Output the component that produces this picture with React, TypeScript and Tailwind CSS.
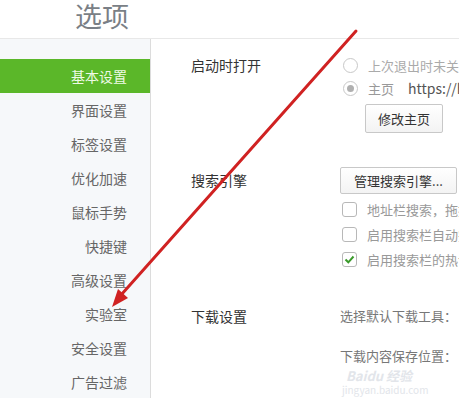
import React from "react";

const font = { fontFamily: '"Microsoft YaHei", "Noto Sans CJK SC", "Noto Sans", sans-serif' };

const menu = ["基本设置", "界面设置", "标签设置", "优化加速", "鼠标手势", "快捷键", "高级设置", "实验室", "安全设置", "广告过滤"];

function Radio({ checked }: { checked?: boolean }) {
  return (
    <span className="w-[15px] h-[15px] rounded-full border border-[#c8c8c8] bg-white flex items-center justify-center shrink-0">
      {checked && <span className="w-[7px] h-[7px] rounded-full bg-[#b0b0b0]" />}
    </span>
  );
}

function Check({ checked }: { checked?: boolean }) {
  return (
    <span className="w-[15px] h-[15px] rounded-[3px] border border-[#b8b8b8] bg-white flex items-center justify-center shrink-0">
      {checked && (
        <svg width="11" height="11" viewBox="0 0 11 11">
          <path d="M1.5 5.5 L4.3 8.3 L9.5 2.5" fill="none" stroke="#3a9a2a" strokeWidth="2" />
        </svg>
      )}
    </span>
  );
}

export default function App() {
  return (
    <div className="relative w-[459px] h-[398px] overflow-hidden bg-white" style={font}>
      <div className="h-[39px] border-b border-[#e8e8e8] pl-[75px] flex items-start">
        <span className="text-[27px] leading-[31px] text-[#7a7f86]">选项</span>
      </div>
      <div className="flex h-[359px]">
        <div className="w-[151px] shrink-0 bg-[#f6f8fa] border-r border-[#dcdcdc] pt-[20px]">
          {menu.map((m, i) => (
            <div
              key={m}
              className={
                "h-[34px] flex items-center justify-end pr-[23px] text-[14px] " +
                (i === 0 ? "bg-[#5bb729] text-[#eefae6]" : "text-[#666]")
              }
            >
              {m}
            </div>
          ))}
        </div>
        <div className="flex-1 min-w-0 pl-[40px] pt-[15px] text-[13px] whitespace-nowrap overflow-hidden">
          <div className="flex">
            <div className="w-[149px] shrink-0 h-[23px] flex items-center text-[14px] text-[#333]">启动时打开</div>
            <div className="flex flex-col">
              <div className="h-[23px] flex items-center gap-[10px] pl-[3px] text-[#aaa]">
                <Radio />
                <span>上次退出时未关闭的页面</span>
              </div>
              <div className="h-[23px] flex items-center gap-[10px] pl-[3px]">
                <Radio checked />
                <span className="text-[#999]">主页</span>
                <span className="text-[#555] text-[14px] ml-[4px]">https://hao.360.cn</span>
              </div>
              <div className="pl-[25px] mt-[4px]">
                <div className="w-[78px] h-[29px] border border-[#c8c8c8] rounded-[2px] bg-gradient-to-b from-white to-[#f3f3f3] flex items-center justify-center text-[#333] text-[13px]">
                  修改主页
                </div>
              </div>
            </div>
          </div>

          <div className="flex mt-[34px]">
            <div className="w-[149px] shrink-0 h-[27px] flex items-center text-[14px] text-[#333]">搜索引擎</div>
            <div className="flex flex-col">
              <div className="w-[117px] h-[27px] border border-[#c8c8c8] rounded-[2px] bg-gradient-to-b from-white to-[#f3f3f3] flex items-center justify-center text-[#333] text-[13px]">
                管理搜索引擎...
              </div>
              <div className="h-[25px] mt-[3px] flex items-center gap-[10px] pl-[2px] text-[#999]">
                <Check />
                <span>地址栏搜索，拖拽搜索使用默认搜索引擎</span>
              </div>
              <div className="h-[25px] flex items-center gap-[10px] pl-[2px] text-[#999]">
                <Check />
                <span>启用搜索栏自动完成</span>
              </div>
              <div className="h-[25px] flex items-center gap-[10px] pl-[2px] text-[#999]">
                <Check checked />
                <span>启用搜索栏的热词推荐</span>
              </div>
            </div>
          </div>

          <div className="flex mt-[33px]">
            <div className="w-[149px] shrink-0 h-[22px] flex items-center text-[14px] text-[#333]">下载设置</div>
            <div className="flex flex-col text-[#777]">
              <div className="h-[22px] flex items-center">选择默认下载工具：</div>
              <div className="h-[22px] mt-[18px] flex items-center">下载内容保存位置：</div>
            </div>
          </div>
        </div>
      </div>

      <div className="absolute left-[346px] top-[369px] text-[13px] font-bold italic text-[#e2e5ea] leading-none">Baidu 经验</div>
      <div className="absolute left-[342px] top-[385px] text-[10px] text-[#e2e5ea] leading-none">jingyan.baidu.com</div>

      <svg className="absolute inset-0 pointer-events-none" width="459" height="398" viewBox="0 0 459 398">
        <line x1="356" y1="31" x2="121" y2="295" stroke="#d02222" strokeWidth="3" strokeLinecap="round" />
        <polygon points="112,307 128,298 118,289" fill="#d02222" />
      </svg>
    </div>
  );
}
